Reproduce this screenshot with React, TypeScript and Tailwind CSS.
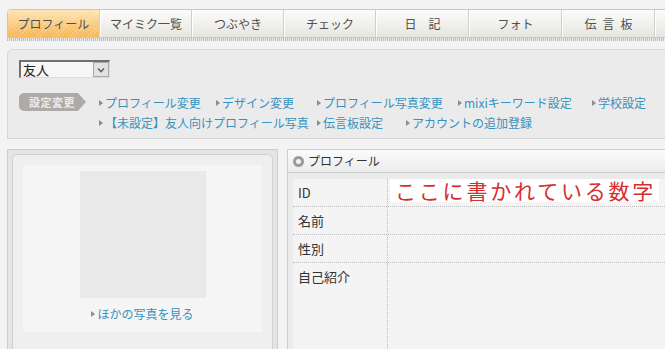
import React from "react";

const tabs = [
  { t: "プロフィール", s: "" },
  { t: "マイミク一覧", s: "" },
  { t: "つぶやき", s: "" },
  { t: "チェック", s: "" },
  { t: "日記", s: "tracking-[12px] pl-[12px]" },
  { t: "フォト", s: "" },
  { t: "伝言板", s: "tracking-[6px] pl-[6px]" },
  { t: "", s: "" },
];
const tabWidths = ["w-[92px]", "w-[92px]", "w-[92px]", "w-[92px]", "w-[93px]", "w-[93px]", "w-[93px]", "w-[93px]"];

function Arrow() {
  return <span className="inline-block w-0 h-0 border-y-[3.5px] border-y-transparent border-l-[4px] border-l-[#8c8c8c] mr-[2px]" />;
}

function LinkItem({ text, w }: { text: string; w: string }) {
  return (
    <div className={`flex items-center shrink-0 ${w}`}>
      <Arrow />
      <span className="text-[#3692c0] text-[12px] leading-none whitespace-nowrap">{text}</span>
    </div>
  );
}

export default function App() {
  return (
    <div
      className="w-[665px] h-[349px] overflow-hidden bg-[#f3f3f3]"
      style={{ fontFamily: '"Noto Sans CJK JP", "Noto Sans", sans-serif' }}
    >
      <div className="w-[760px] pl-[7px] pt-[9px]">
        {/* tabs */}
        <div className="flex h-[29px] border border-[#c8c8c8] rounded-tl-[4px] overflow-hidden bg-[#eee]">
          {tabs.map((t, i) => (
            <div
              key={i}
              className={`${tabWidths[i]} shrink-0 flex items-center justify-center text-[12px] text-[#4f4f4f] border-r border-[#cfcfcf] border-l border-l-white ${
                i === 0
                  ? "bg-[repeating-linear-gradient(135deg,rgba(255,255,255,0)_0px,rgba(255,255,255,0)_2px,rgba(255,255,255,0.22)_2px,rgba(255,255,255,0.22)_3px),linear-gradient(#fde4b0,#f6b552)] border-l-0"
                  : "bg-[linear-gradient(#fcfcfb,#e6e5e0)]"
              }`}
            >
              <span className={t.s}>{t.t}</span>
            </div>
          ))}
        </div>
        <div className="h-[3px] bg-[repeating-linear-gradient(90deg,#bdbdbd_0px,#bdbdbd_1px,#ececec_1px,#ececec_2px)]" />

        {/* settings panel */}
        <div className="mt-[8px] h-[90px] border border-[#d6d6d6] rounded-tl-[6px] bg-[#ebebeb] pl-[11px] pt-[10px]">
          <div className="flex w-[91px] h-[18px] bg-[#f6f6f6] border-t-2 border-l-2 border-[#707070] border-r border-b border-r-[#dcdcdc] border-b-[#dcdcdc]">
            <span className="flex-1 pl-[2px] text-[13px] leading-[16px] text-[#222]">友人</span>
            <span className="w-[16px] h-[15px] bg-[#e2e2e2] border border-[#a8a8a8] flex items-center justify-center">
              <svg width="8" height="6" viewBox="0 0 8 6">
                <path d="M1 1.5 L4 4.5 L7 1.5" stroke="#666" strokeWidth="1.6" fill="none" />
              </svg>
            </span>
          </div>
          <div className="flex mt-[15px]">
            <div className="w-[67px] h-[18px] shrink-0 bg-[#aeaaa6] rounded-l-[5px] [clip-path:polygon(0_0,88%_0,100%_50%,88%_100%,0_100%)] flex items-center pl-[10px] text-[11px] font-bold text-[#ececec] tracking-[0.5px]">
              設定変更
            </div>
            <div className="ml-[13px] flex flex-col gap-[8px] pt-[4px]">
              <div className="flex items-center">
                <LinkItem text="プロフィール変更" w="w-[117px]" />
                <LinkItem text="デザイン変更" w="w-[101px]" />
                <LinkItem text="プロフィール写真変更" w="w-[141px]" />
                <LinkItem text="mixiキーワード設定" w="w-[134px]" />
                <LinkItem text="学校設定" w="w-[80px]" />
              </div>
              <div className="flex items-center">
                <LinkItem text="【未設定】友人向けプロフィール写真" w="w-[218px]" />
                <LinkItem text="伝言板設定" w="w-[89px]" />
                <LinkItem text="アカウントの追加登録" w="w-[160px]" />
              </div>
            </div>
          </div>
        </div>

        {/* bottom panels */}
        <div className="mt-[10px] flex gap-[9px]">
          <div className="w-[271px] shrink-0 h-[220px] border border-[#cdcdcd] bg-[#e4e4e4] pt-[4px] px-[4px]">
            <div className="h-[220px] border border-[#d0d0d0] rounded-t-[5px] bg-[#efefef] pt-[10px] px-[10px]">
              <div className="h-[167px] bg-[#f5f5f5] pt-[6px] flex flex-col items-center">
                <div className="w-[126px] h-[127px] bg-[#e9e9e9]" />
                <div className="mt-[10px] flex items-center">
                  <Arrow />
                  <span className="text-[#3692c0] text-[12px] leading-none">ほかの写真を見る</span>
                </div>
              </div>
            </div>
          </div>

          <div className="flex-1 h-[220px] border border-[#cdcdcd] bg-[#ebebeb]">
            <div className="h-[23px] border-b border-[#cdcdcd] bg-[linear-gradient(#fbfbfb,#ececec)] flex items-center pl-[5px]">
              <span className="w-[11px] h-[11px] rounded-full border-[3px] border-[#9a9a9a] bg-[#f2f2f2]" />
              <span className="ml-[4px] text-[12px] text-[#333]">プロフィール</span>
            </div>
            <div className="mt-[6px] ml-[5px] bg-[#f4f4f4] h-[200px]">
              {[
                { label: "ID", h: "h-[28px]" },
                { label: "名前", h: "h-[28px]" },
                { label: "性別", h: "h-[28px]" },
                { label: "自己紹介", h: "h-[100px]" },
              ].map((r, i) => (
                <div key={r.label} className={`flex ${r.h} ${i < 3 ? "border-b border-dotted border-[#bdbdbd]" : ""}`}>
                  <div className={`w-[95px] shrink-0 border-r border-dotted border-[#bdbdbd] pl-[5px] text-[13px] text-[#333] ${i === 3 ? "pt-[4px]" : "flex items-center"}`}>
                    {r.label}
                  </div>
                  {i === 0 && (
                    <div className="ml-[2px] w-[269px] h-[23px] bg-white flex items-center pl-[5px] text-[21px] leading-none tracking-[2.8px] text-[#d62d2d] whitespace-nowrap">
                      ここに書かれている数字
                    </div>
                  )}
                </div>
              ))}
            </div>
          </div>
        </div>
      </div>
    </div>
  );
}
